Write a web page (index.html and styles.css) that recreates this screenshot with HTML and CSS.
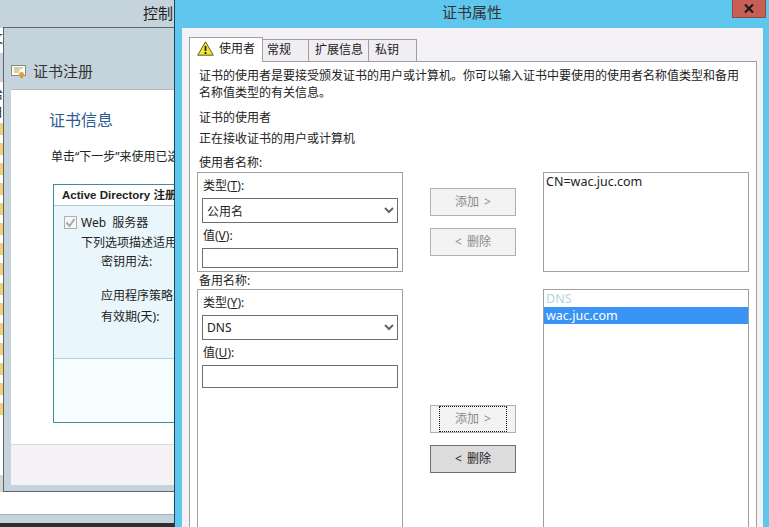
FILE: index.html
```html
<!DOCTYPE html>
<html lang="zh-CN">
<head>
    <meta charset="UTF-8">
    <title>证书属性</title>
    <link rel="stylesheet" href="styles.css">
</head>
<body>
    <div class="desktop">
        <!-- Control panel window, mostly hidden -->
        <div class="back-window">
            <div class="back-title">控制</div>
            <div class="back-strip">
                <div class="strip-top"><span>文</span></div>
                <div class="strip-band"></div>
                <div class="strip-list">
                    <div class="strip-char"><span>给</span></div>
                    <div class="strip-char"><span>日</span></div>
                    <div class="file-row"></div>
                    <div class="file-row"></div>
                    <div class="file-row"></div>
                    <div class="file-row"></div>
                    <div class="file-row"></div>
                    <div class="file-row"></div>
                    <div class="file-row"></div>
                    <div class="file-row"></div>
                    <div class="file-row"></div>
                    <div class="file-row"></div>
                    <div class="file-row"></div>
                    <div class="file-row"></div>
                    <div class="file-row"></div>
                    <div class="file-row"></div>
                    <div class="file-row"></div>
                    <div class="strip-patch"></div>
                </div>
            </div>
            <div class="back-footer"></div>
        </div>

        <!-- Certificate enrollment wizard -->
        <div class="wizard">
            <div class="wizard-head">
                <svg class="cert-icon" width="16" height="16" viewBox="0 0 16 16">
                    <rect x="0.5" y="2.5" width="14" height="10" fill="#fdfdf8" stroke="#8a8a80"/>
                    <path d="M3 5h9M3 7h6M3 9h5" stroke="#b9a15c"/>
                    <circle cx="10.5" cy="11.5" r="2.5" fill="#e0a030"/>
                    <path d="M9.5 13.5v2l1-.7 1 .7v-2" fill="#c98a20"/>
                </svg>
                <span>证书注册</span>
            </div>
            <div class="wizard-body">
                <h2 class="wizard-heading">证书信息</h2>
                <p class="wizard-hint">单击“下一步”来使用已选择的证书</p>
                <div class="policy-box">
                    <div class="policy-title">Active Directory 注册策略</div>
                    <div class="policy-detail">
                        <div class="policy-check">
                            <span class="checkbox">
                                <svg width="11" height="11" viewBox="0 0 11 11"><path d="M1.5 5.5l3 3.5 5-7" fill="none" stroke="#a8a8a8" stroke-width="2"/></svg>
                            </span>
                            <span class="check-text">Web 服务器</span>
                        </div>
                        <div class="policy-desc">下列选项描述适用于</div>
                        <div class="policy-field">密钥用法:</div>
                        <div class="policy-field policy-gap">应用程序策略:</div>
                        <div class="policy-field policy-last">有效期(天):</div>
                    </div>
                </div>
            </div>
            <div class="wizard-footer"></div>
        </div>

        <!-- Certificate properties dialog -->
        <div class="dialog">
            <div class="dialog-title">
                <span>证书属性</span>
                <div class="close-btn">
                    <svg width="10" height="9" viewBox="0 0 10 9"><path d="M1 0.5l8 8M9 0.5l-8 8" stroke="#1c1c1c" stroke-width="2.2"/></svg>
                </div>
            </div>
            <div class="dialog-body">
                <div class="tabs">
                    <div class="tab tab-active">
                        <svg width="17" height="15" viewBox="0 0 17 15">
                            <path d="M8.5 0.8L16.3 14.2H0.7z" fill="#f4e62c" stroke="#5c5a30"/>
                            <path d="M8.5 5v5" stroke="#222" stroke-width="1.8"/>
                            <path d="M8.5 11v2" stroke="#222" stroke-width="1.8"/>
                        </svg>
                        <span>使用者</span>
                    </div>
                    <div class="tab tab-general">常规</div>
                    <div class="tab tab-ext">扩展信息</div>
                    <div class="tab tab-key">私钥</div>
                </div>
                <div class="tab-pane">
                    <p class="intro">证书的使用者是要接受颁发证书的用户或计算机。你可以输入证书中要使用的使用者名称值类型和备用名称值类型的有关信息。</p>
                    <p class="subject-head">证书的使用者</p>
                    <p class="subject-sub">正在接收证书的用户或计算机</p>

                    <div class="name-grid">
                        <div class="name-col">
                            <div class="group-label">使用者名称:</div>
                            <div class="group-box group-subject">
                                <div class="field-label">类型(<u>T</u>):</div>
                                <div class="select">
                                    <span>公用名</span>
                                    <svg width="10" height="7" viewBox="0 0 10 7"><path d="M1 1l4 4 4-4" fill="none" stroke="#666" stroke-width="2"/></svg>
                                </div>
                                <div class="field-label">值(<u>V</u>):</div>
                                <div class="text-input input-short"></div>
                            </div>
                            <div class="group-label label-alt">备用名称:</div>
                            <div class="group-box group-alt">
                                <div class="field-label">类型(<u>Y</u>):</div>
                                <div class="select">
                                    <span>DNS</span>
                                    <svg width="10" height="7" viewBox="0 0 10 7"><path d="M1 1l4 4 4-4" fill="none" stroke="#666" stroke-width="2"/></svg>
                                </div>
                                <div class="field-label">值(<u>U</u>):</div>
                                <div class="text-input"></div>
                            </div>
                        </div>

                        <div class="btn-col">
                            <div class="btn-pair">
                                <div class="btn">添加 &gt;</div>
                                <div class="btn">&lt; 删除</div>
                            </div>
                            <div class="btn-pair pair-bottom">
                                <div class="btn btn-focus"><span class="focus-ring">添加 &gt;</span></div>
                                <div class="btn btn-on">&lt; 删除</div>
                            </div>
                        </div>

                        <div class="list-col">
                            <div class="list list-subject">
                                <div class="list-item">CN=wac.juc.com</div>
                            </div>
                            <div class="list list-alt">
                                <div class="list-item list-head">DNS</div>
                                <div class="list-item list-selected">wac.juc.com</div>
                            </div>
                        </div>
                    </div>
                </div>
            </div>
        </div>
    </div>
</body>
</html>
```

FILE: styles.css
```css
/* General Reset */
* {
    margin: 0;
    padding: 0;
    box-sizing: border-box;
}

html, body {
    height: 100%;
    overflow: hidden;
}

body {
    font-family: "Noto Sans", "Noto Sans CJK SC", sans-serif;
    font-size: 12px;
    color: #222;
    background: #ffffff;
}

.desktop {
    position: relative;
    width: 769px;
    height: 527px;
    overflow: hidden;
}

/* Back window */
.back-window {
    position: absolute;
    left: 0;
    top: 0;
    width: 176px;
    height: 527px;
    background: #c5d4dc;
}

.back-title {
    height: 28px;
    padding-left: 143px;
    font-size: 15px;
    line-height: 27px;
    color: #222;
}

.back-strip {
    height: 486px;
    background: #ffffff;
    display: flex;
    flex-direction: column;
    overflow: hidden;
}

.strip-top {
    flex: none;
    width: 3px;
    height: 25px;
    padding-top: 2px;
    display: flex;
    justify-content: flex-end;
    line-height: 18px;
}

.strip-band {
    flex: none;
    height: 29px;
    background: #c5d4dc;
}

.strip-list {
    flex: 1;
    width: 3px;
    display: flex;
    flex-direction: column;
}

.strip-char {
    flex: none;
    height: 18px;
    display: flex;
    justify-content: flex-end;
    line-height: 18px;
}

.strip-char:first-child {
    margin-top: 4px;
}

.file-row {
    flex: none;
    width: 3px;
    height: 12px;
    margin-top: 1px;
    margin-bottom: 7px;
    background: #f2cf78;
}

.strip-patch {
    flex: none;
    height: 17px;
    margin-top: auto;
    margin-bottom: 22px;
    background: #d6d8d4;
}

.back-footer {
    height: 13px;
    border-top: 1px solid #a9b0b4;
    border-bottom: 4px solid #2c2f30;
    background: #c5d4dc;
}

/* Wizard */
.wizard {
    position: absolute;
    left: 3px;
    top: 27px;
    width: 172px;
    height: 465px;
    padding: 0 0 6px 7px;
    background: #c5d4dc;
    border: 1px solid #5e6468;
    border-right: none;
    display: flex;
    flex-direction: column;
}

.wizard-head {
    flex: none;
    height: 61px;
    padding-top: 31px;
    display: flex;
    align-items: flex-start;
    gap: 6px;
    font-size: 15px;
    line-height: 24px;
    color: #333;
}

.cert-icon {
    margin-top: 4px;
}

.wizard-body {
    flex: 1;
    min-height: 0;
    background: #ffffff;
    border-top: 1px solid #b0bcc4;
    padding-left: 38px;
    overflow: hidden;
    white-space: nowrap;
}

.wizard-heading {
    font-size: 16px;
    font-weight: 400;
    line-height: 24px;
    margin-top: 18px;
    color: #2f5b94;
}

.wizard-hint {
    margin-top: 16px;
    margin-left: 2px;
    line-height: 18px;
}

.policy-box {
    width: 200px;
    height: 239px;
    margin-top: 18px;
    margin-left: 4px;
    background: #f5fdff;
    border: 1px solid #3c8f98;
}

.policy-title {
    height: 21px;
    padding-left: 8px;
    font-family: "Liberation Sans", "Noto Sans CJK SC", sans-serif;
    font-size: 11.5px;
    font-weight: 700;
    line-height: 20px;
    background: #ffffff;
    border-bottom: 1px solid #b4c8d2;
}

.policy-detail {
    height: 153px;
    background: #e9f7fd;
    border-bottom: 1px solid #b4d0de;
    padding-top: 7px;
    line-height: 18px;
}

.policy-check {
    display: flex;
    align-items: center;
    gap: 4px;
    padding-left: 10px;
    height: 19px;
}

.check-text {
    word-spacing: 3px;
}

.checkbox {
    width: 13px;
    height: 13px;
    background: #f6f6f6;
    border: 1px solid #b0b0b0;
    display: flex;
}

.policy-desc {
    margin-top: 2px;
    padding-left: 27px;
}

.policy-field {
    margin-top: 1px;
    padding-left: 47px;
}

.policy-gap {
    margin-top: 16px;
}

.policy-last {
    margin-top: 3px;
}

.wizard-footer {
    flex: none;
    height: 41px;
    background: #f5f2f6;
    border-top: 1px solid #dcdcdc;
}

/* Dialog */
.dialog {
    position: absolute;
    left: 174px;
    top: 0;
    width: 595px;
    height: 527px;
    background: #5fc6ee;
    border-left: 1px solid #18475a;
    padding-right: 6px;
    display: flex;
    flex-direction: column;
}

.dialog-title {
    position: relative;
    flex: none;
    height: 28px;
    margin-right: -6px;
    font-size: 15px;
    line-height: 25px;
    text-align: center;
    color: #333;
}

.close-btn {
    position: absolute;
    right: 3px;
    top: -1px;
    width: 34px;
    height: 19px;
    background: #c75f56;
    border: 1px solid #8d4b48;
    display: flex;
    align-items: center;
    justify-content: center;
}

.dialog-body {
    flex: 1;
    margin-left: 7px;
    padding: 9px 6px 0 7px;
    background: #f4f2f6;
    display: flex;
    flex-direction: column;
    min-height: 0;
}

/* Tabs */
.tabs {
    display: flex;
    height: 24px;
    flex: none;
}

.tab {
    height: 22px;
    margin-top: 2px;
    background: #f0eef2;
    border: 1px solid #a0a0a0;
    border-left: none;
    border-bottom: none;
    line-height: 20px;
}

.tab-active {
    position: relative;
    z-index: 1;
    width: 74px;
    height: 25px;
    margin-top: 0;
    padding: 0 0 3px 7px;
    background: #ffffff;
    border-left: 1px solid #a0a0a0;
    display: flex;
    align-items: center;
    gap: 5px;
}

.tab-general {
    width: 46px;
    padding-left: 4px;
}

.tab-ext {
    width: 60px;
    padding-left: 6px;
}

.tab-key {
    width: 48px;
    padding-left: 6px;
}

.tab-pane {
    flex: 1;
    min-height: 0;
    background: #ffffff;
    border: 1px solid #a0a0a0;
    border-bottom: none;
    padding: 5px 9px 0 9px;
    overflow: hidden;
}

.intro {
    line-height: 17px;
}

.subject-head {
    margin-top: 8px;
    line-height: 18px;
}

.subject-sub {
    margin-top: 3px;
    line-height: 18px;
}

/* Name groups */
.name-grid {
    display: grid;
    grid-template-columns: 206px 140px 206px;
    margin-top: 6px;
    margin-left: -2px;
}

.group-label {
    padding-left: 2px;
    line-height: 18px;
}

.label-alt {
    line-height: 17px;
}

.group-box {
    border: 1px solid #a0a0a0;
    padding: 4px 4px 0 4px;
}

.group-subject {
    height: 100px;
}

.group-alt {
    height: 300px;
}

.field-label {
    line-height: 18px;
    padding-left: 1px;
}

.select {
    height: 25px;
    margin-top: 3px;
    margin-bottom: 4px;
    padding: 0 3px 0 4px;
    border: 1px solid #6e6e6e;
    background: #ffffff;
    display: flex;
    align-items: center;
    justify-content: space-between;
}

.text-input {
    height: 23px;
    margin-top: 3px;
    border: 1px solid #6e6e6e;
    background: #ffffff;
}

.input-short {
    height: 20px;
}

/* Buttons */
.btn-col {
    padding: 34px 0 0 27px;
}

.btn-pair {
    display: flex;
    flex-direction: column;
    gap: 12px;
}

.pair-bottom {
    margin-top: 149px;
}

.btn {
    width: 86px;
    height: 28px;
    background: #f3f3f3;
    border: 1px solid #b0b0b0;
    color: #8a8a8a;
    text-align: center;
    line-height: 26px;
    word-spacing: 2px;
}

.btn-focus {
    padding: 0 8px;
}

.focus-ring {
    display: block;
    height: 26px;
    line-height: 24px;
    border: 1px dotted #111;
}

.btn-on {
    background: #dcdcdc;
    border-color: #707070;
    color: #222;
}

/* Lists */
.list-col {
    padding-top: 18px;
}

.list {
    width: 206px;
    border: 1px solid #a0a0a0;
    background: #ffffff;
}

.list-subject {
    height: 100px;
}

.list-alt {
    height: 300px;
    margin-top: 17px;
}

.list-item {
    height: 17px;
    padding-left: 2px;
    line-height: 17px;
    font-size: 12.5px;
}

.list-head {
    color: #b5d4e4;
}

.list-selected {
    background: #3a94f5;
    color: #ffffff;
}
```
